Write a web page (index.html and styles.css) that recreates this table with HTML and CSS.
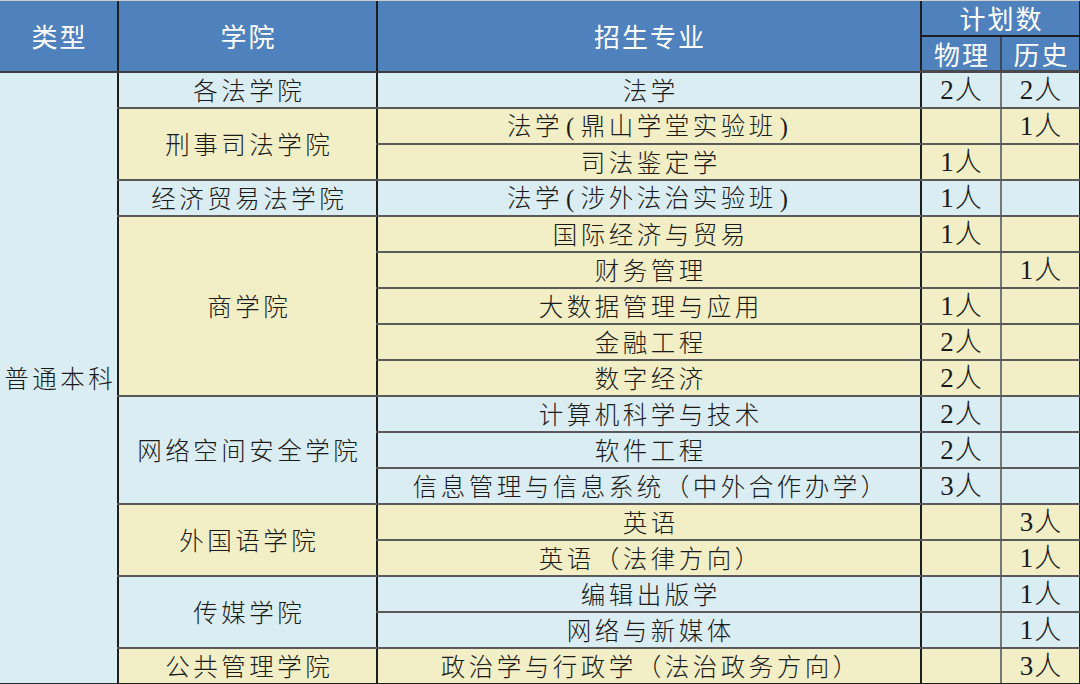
FILE: index.html
```html
<!DOCTYPE html>
<html lang="zh">
<head>
<meta charset="utf-8">
<title>招生计划</title>
<link rel="stylesheet" href="styles.css">
</head>
<body>
<table class="plan">
  <colgroup>
    <col class="c-type"><col class="c-college"><col class="c-major"><col class="c-num"><col class="c-num2">
  </colgroup>
  <thead>
    <tr class="hr1">
      <th rowspan="2" class="h-type">类型</th>
      <th rowspan="2">学院</th>
      <th rowspan="2">招生专业</th>
      <th colspan="2" class="h-plan">计划数</th>
    </tr>
    <tr class="hr2">
      <th class="h-sub">物理</th>
      <th class="h-sub h-last">历史</th>
    </tr>
  </thead>
  <tbody>
    <tr class="b">
      <td rowspan="17" class="type">普通本科</td>
      <td>各法学院</td><td>法学</td><td class="n">2人</td><td class="n n2">2人</td>
    </tr>
    <tr class="y"><td rowspan="2">刑事司法学院</td><td>法学<span class="p">(</span>鼎山学堂实验班<span class="p">)</span></td><td class="n"></td><td class="n n2">1人</td></tr>
    <tr class="y"><td>司法鉴定学</td><td class="n">1人</td><td class="n n2"></td></tr>
    <tr class="b"><td>经济贸易法学院</td><td>法学<span class="p">(</span>涉外法治实验班<span class="p">)</span></td><td class="n">1人</td><td class="n n2"></td></tr>
    <tr class="y"><td rowspan="5">商学院</td><td>国际经济与贸易</td><td class="n">1人</td><td class="n n2"></td></tr>
    <tr class="y"><td>财务管理</td><td class="n"></td><td class="n n2">1人</td></tr>
    <tr class="y"><td>大数据管理与应用</td><td class="n">1人</td><td class="n n2"></td></tr>
    <tr class="y"><td>金融工程</td><td class="n">2人</td><td class="n n2"></td></tr>
    <tr class="y"><td>数字经济</td><td class="n">2人</td><td class="n n2"></td></tr>
    <tr class="b"><td rowspan="3">网络空间安全学院</td><td>计算机科学与技术</td><td class="n">2人</td><td class="n n2"></td></tr>
    <tr class="b"><td>软件工程</td><td class="n">2人</td><td class="n n2"></td></tr>
    <tr class="b"><td>信息管理与信息系统（中外合作办学）</td><td class="n">3人</td><td class="n n2"></td></tr>
    <tr class="y"><td rowspan="2">外国语学院</td><td>英语</td><td class="n"></td><td class="n n2">3人</td></tr>
    <tr class="y"><td>英语（法律方向）</td><td class="n"></td><td class="n n2">1人</td></tr>
    <tr class="b"><td rowspan="2">传媒学院</td><td>编辑出版学</td><td class="n"></td><td class="n n2">1人</td></tr>
    <tr class="b"><td>网络与新媒体</td><td class="n"></td><td class="n n2">1人</td></tr>
    <tr class="y"><td>公共管理学院</td><td>政治学与行政学（法治政务方向）</td><td class="n"></td><td class="n n2">3人</td></tr>
  </tbody>
</table>
</body>
</html>
```

FILE: styles.css
```css
html, body {
  margin: 0;
  padding: 0;
  background: #ffffff;
}

body {
  width: 1080px;
  height: 684px;
  overflow: hidden;
  border-top: 1px solid #cfcfcf;
  box-sizing: border-box;
}

.plan {
  width: 1080px;
  table-layout: fixed;
  border-collapse: collapse;
  font-family: "Liberation Serif", "Noto Sans CJK SC", serif;
  font-size: 24px;
  color: #1a1a1a;
}

.c-type { width: 118px; }
.c-college { width: 259px; }
.c-major { width: 544px; }
.c-num { width: 80px; }
.c-num2 { width: 79px; }

.plan th {
  background: #4f81bd;
  color: #ffffff;
  font-weight: normal;
  padding: 0 0 0 2px;
  line-height: 1;
  letter-spacing: 2px;
  border-left: 2px solid #1e1e1e;
  border-bottom: 2px solid #3d3d3d;
  font-family: "Noto Sans CJK SC", sans-serif;
  font-size: 26px;
}

.plan tr.hr1 th { height: 34px; }
.plan tr.hr2 th { height: 33px; }

.plan th.h-type { border-left: none; }
.plan th.h-plan { border-bottom: 2px solid #1e1e1e; border-right: 2px solid #1e1e1e; }
.plan th.h-sub { border-bottom: 3px solid #4a4a4a; }
.plan th.h-last { border-left: 2px solid #3a4a60; border-right: 2px solid #1e1e1e; }

.plan td {
  height: 34px;
  padding: 0 0 0 3.5px;
  text-align: center;
  vertical-align: middle;
  line-height: 1;
  letter-spacing: 3.5px;
  white-space: nowrap;
  border-left: 2px solid #1e1e1e;
  border-bottom: 2px solid #5a5a5a;
  font-family: "Noto Sans CJK SC", sans-serif;
  font-size: 24.5px;
  font-weight: 300;
}

.plan td .p {
  font-family: "Liberation Serif", serif;
  padding: 0 3px;
}

.plan tr.b td { background: #daedf3; }
.plan tr.y td { background: #f2efc6; }

.plan td.type {
  background: #daedf3;
  border-left: none;
  border-bottom: 2px solid #2a2a2a;
}

.plan td.n {
  font-family: "Liberation Serif", "Noto Sans CJK SC", serif;
  font-size: 27px;
  letter-spacing: 1px;
  padding-left: 1px;
}

.plan td.n2 {
  border-left: 2px solid #777777;
  border-right: 2px solid #1e1e1e;
}

.plan tbody tr:last-child td { border-bottom: 2px solid #1e1e1e; }
```
